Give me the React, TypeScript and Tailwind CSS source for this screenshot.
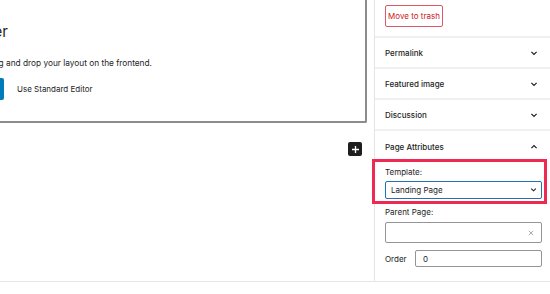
import React from 'react';

const Chevron: React.FC<{ up?: boolean; size?: number }> = ({ up, size = 10 }) => (
  <svg width={size} height={size * 0.8} viewBox="0 0 10 8" fill="none">
    <path
      d={up ? 'M2.4 5.2L5 2.6L7.6 5.2' : 'M2.4 2.8L5 5.4L7.6 2.8'}
      stroke="#1e1e1e"
      strokeWidth="1.2"
    />
  </svg>
);

const PanelRow: React.FC<{ title: string; open?: boolean; last?: boolean }> = ({ title, open, last }) => (
  <div
    className={`flex h-[31px] items-center justify-between pl-[10px] pr-[11px] text-[8px] font-medium ${
      last ? '' : 'border-b-2 border-[#f0f0f0]'
    }`}
  >
    <span>{title}</span>
    <Chevron up={open} />
  </div>
);

export default function App() {
  return (
    <div className="relative h-[294px] w-[550px] overflow-hidden bg-white font-['Inter',sans-serif] text-[#1e1e1e]">
      <div className="flex h-[281px]">
        {/* Editor canvas */}
        <main className="flex-1">
          <div className="w-[367px] rounded-br-[2px] border-b-2 border-r-2 border-[#8c8c8c] pb-[21px] pt-[22px]">
            <div className="flex w-[8px] justify-end whitespace-nowrap text-[15px] leading-[20px]">
              <span className="shrink-0">Beaver Builder</span>
            </div>
            <div className="mt-[15px] flex w-[152px] justify-end whitespace-nowrap text-[8.3px] leading-[12px]">
              <span className="shrink-0">Beaver Builder lets you drag and drop your layout on the frontend.</span>
            </div>
            <div className="mt-[9px] flex h-[22px] items-center">
              <div className="flex w-[4px] justify-end">
                <button className="h-[22px] shrink-0 whitespace-nowrap rounded-[2px] bg-[#007cba] px-[8px] text-[8px] text-white">
                  Launch Beaver Builder
                </button>
              </div>
              <span className="ml-[13px] text-[8px] leading-[12px]">Use Standard Editor</span>
            </div>
          </div>

          <div className="mt-[19px] flex justify-end pr-[12px]">
            <button className="flex h-[14px] w-[14px] items-center justify-center rounded-[2px] bg-[#1e1e1e]">
              <svg width="9" height="9" viewBox="0 0 9 9" fill="none">
                <path d="M4.5 1v7M1 4.5h7" stroke="#fff" strokeWidth="1.3" />
              </svg>
            </button>
          </div>
        </main>

        {/* Settings sidebar */}
        <aside className="w-[176px] border-l border-[#e4e4e4]">
          <div className="h-[38px] border-b-2 border-[#f0f0f0] pl-[10px] pt-[5px]">
            <button className="flex h-[22px] w-[58px] items-center justify-center rounded-[2px] border border-[#dc5a66] text-[8px] text-[#cc1818]">
              Move to trash
            </button>
          </div>
          <PanelRow title="Permalink" />
          <PanelRow title="Featured image" />
          <PanelRow title="Discussion" />
          <PanelRow title="Page Attributes" open last />

          <div className="pl-[10px] pr-[8px] pt-[4px] text-[8px]">
            <div className="leading-[12px]">Template:</div>
            <div className="mt-[3px] flex h-[18px] items-center justify-between rounded-[2px] border border-[#2271b1] pl-[5px] pr-[3px]">
              <span>Landing Page</span>
              <Chevron size={9} />
            </div>

            <div className="mt-[7px] leading-[12px]">Parent Page:</div>
            <div className="mt-[4px] flex h-[21px] items-center justify-end rounded-[2px] border border-[#949494] pr-[7px]">
              <svg width="6" height="6" viewBox="0 0 6 6" fill="none">
                <path d="M0.8 0.8l4.4 4.4M5.2 0.8L0.8 5.2" stroke="#a0a0a0" strokeWidth="0.9" />
              </svg>
            </div>

            <div className="mt-[7px] flex items-center">
              <span className="w-[30px] leading-[12px]">Order</span>
              <div className="flex h-[17px] flex-1 items-center rounded-[2px] border border-[#949494] pl-[7px]">
                0
              </div>
            </div>
          </div>
        </aside>
      </div>

      <div className="h-[13px] border-t border-[#e6e6e6]" />

      {/* Highlight annotation */}
      <div className="pointer-events-none absolute left-[372px] top-[159px] h-[45px] w-[175px] border-[3px] border-[#ee2a52]" />
    </div>
  );
}
